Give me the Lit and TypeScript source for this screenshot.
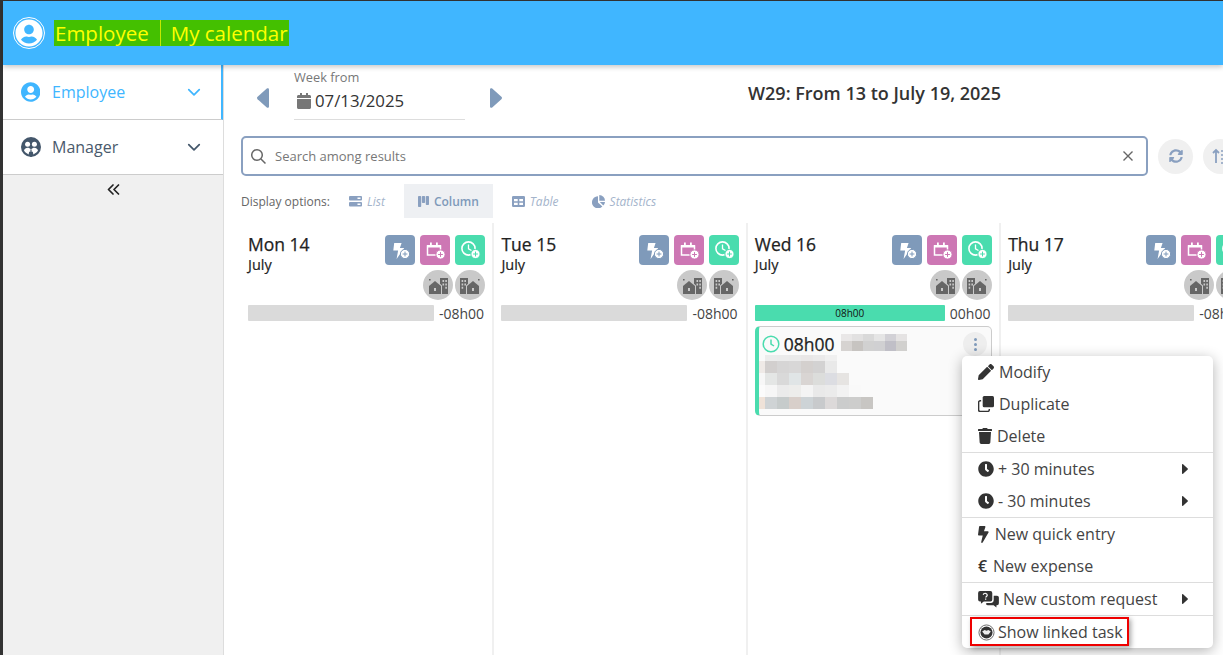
import { LitElement, css, html, svg } from 'lit'
import { customElement } from 'lit/decorators.js'

const fa = (w: number, d: string) =>
  html`<svg class="fa" viewBox="0 0 ${w} 512" fill="currentColor"><path d=${d}></path></svg>`

const CALENDAR = 'M12 192h424c6.6 0 12 5.4 12 12v260c0 26.5-21.5 48-48 48H48c-26.5 0-48-21.5-48-48V204c0-6.6 5.4-12 12-12zm436-44v-36c0-26.5-21.5-48-48-48h-48V12c0-6.6-5.4-12-12-12h-40c-6.6 0-12 5.4-12 12v52H160V12c0-6.6-5.4-12-12-12h-40c-6.6 0-12 5.4-12 12v52H48C21.5 64 0 85.5 0 112v36c0 6.6 5.4 12 12 12h424c6.6 0 12-5.4 12-12z'
const PENCIL = 'M497.9 142.1l-46.1 46.1c-4.7 4.7-12.3 4.7-17 0l-111-111c-4.7-4.7-4.7-12.3 0-17l46.1-46.1c18.7-18.7 49.1-18.7 67.9 0l60.1 60.1c18.8 18.7 18.8 49.1 0 67.9zM284.2 99.8L21.6 362.4.4 483.9c-2.9 16.4 11.4 30.6 27.8 27.8l121.5-21.3 262.6-262.6c4.7-4.7 4.7-12.3 0-17l-111-111c-4.8-4.7-12.4-4.7-17.1 0z'
const TRASH = 'M432 32H312l-9.4-18.7A24 24 0 0 0 281.1 0H166.8a23.72 23.72 0 0 0-21.4 13.3L136 32H16A16 16 0 0 0 0 48v32a16 16 0 0 0 16 16h416a16 16 0 0 0 16-16V48a16 16 0 0 0-16-16zM53.2 467a48 48 0 0 0 47.9 45h245.8a48 48 0 0 0 47.9-45L416 128H32z'
const CLOCK = 'M256,8C119,8,8,119,8,256S119,504,256,504,504,393,504,256,393,8,256,8Zm92.49,313h0l-20,25a16,16,0,0,1-22.49,2.5h0l-67-49.72a40,40,0,0,1-15-31.23V112a16,16,0,0,1,16-16h32a16,16,0,0,1,16,16V256l58,42.5A16,16,0,0,1,348.49,321Z'
const BOLT = 'M296 160H180.6l42.6-129.8C227.2 15 215.7 0 200 0H56C44 0 33.8 8.9 32.2 20.8l-32 240C-1.7 275.2 9.5 288 24 288h118.7L96.6 482.5c-3.6 15.2 8 29.5 23.3 29.5 8.4 0 16.4-4.4 20.8-12l176-304c9.3-15.9-2.2-36-20.7-36z'
const USER = 'M248 8C111 8 0 119 0 256s111 248 248 248 248-111 248-248S385 8 248 8zm0 96c48.6 0 88 39.4 88 88s-39.4 88-88 88-88-39.4-88-88 39.4-88 88-88zm0 344c-58.7 0-111.3-26.6-146.5-68.2 18.8-35.4 55.6-59.8 98.5-59.8 2.4 0 4.8.4 7.1 1.1 13 4.2 26.6 6.9 40.9 6.9 14.3 0 28-2.7 40.9-6.9 2.3-.7 4.7-1.1 7.1-1.1 42.9 0 79.7 24.4 98.5 59.8C359.3 421.4 306.7 448 248 448z'
const SYNC = 'M370.72 133.28C339.458 104.008 298.888 87.962 255.848 88c-77.458.068-144.328 53.178-162.791 126.85-1.344 5.363-6.122 9.15-11.651 9.15H24.103c-7.498 0-13.194-6.807-11.807-14.176C33.933 94.924 134.813 8 256 8c66.448 0 126.791 26.136 171.315 68.685L463.03 40.97C478.149 25.851 504 36.559 504 57.941V192c0 13.255-10.745 24-24 24H345.941c-21.382 0-32.09-25.851-16.971-40.971l41.75-41.749zM32 296h134.059c21.382 0 32.09 25.851 16.971 40.971l-41.75 41.75c31.262 29.273 71.835 45.319 114.876 45.28 77.418-.07 144.315-53.144 162.787-126.849 1.344-5.363 6.122-9.15 11.651-9.15h57.304c7.498 0 13.194 6.807 11.807 14.176C478.067 417.076 377.187 504 256 504c-66.448 0-126.791-26.136-171.315-68.685L48.97 471.03C33.851 486.149 8 475.441 8 454.059V320c0-13.255 10.745-24 24-24z'

// carets in the reference are wider than the plain glyph, so the box stretches them
const caretLeft = html`<svg class="stretch" viewBox="0 0 12 20" preserveAspectRatio="none" fill="currentColor"><path d="M12 1.500v17c0 1.200-1.300 1.800-2.200 1L.6 11.200a1.700 1.700 0 0 1 0-2.400L9.800.5c.9-.8 2.200-.2 2.200 1z"></path></svg>`
const caretRight = html`<svg class="stretch" viewBox="0 0 12 20" preserveAspectRatio="none" fill="currentColor"><path d="M0 18.500v-17C0 .3 1.300-.3 2.200.5l9.200 8.300a1.700 1.700 0 0 1 0 2.400l-9.200 8.300c-.9.8-2.200.2-2.200-1z"></path></svg>`

const chevron = (color: string) =>
  html`<svg width="14" height="14" viewBox="0 0 24 24"><path d="M3 8l9 9 9-9" fill="none" stroke=${color} stroke-width="3" stroke-linecap="round" stroke-linejoin="round"/></svg>`

const badge = (cx: number, cy: number, bg: string) => svg`
  <circle cx=${cx} cy=${cy} r="4.600" fill="#fff" stroke=${bg} stroke-width="1"/>
  <path d="M${cx - 2.400} ${cy}h4.800M${cx} ${cy - 2.400}v4.800" stroke=${bg} stroke-width="1"/>`

const quickIcon = html`<svg width="30" height="30" viewBox="0 0 30 30">
  <path d="M9.200 8h7.400l-1.700 5h4.300L11.600 24l1.500-8.500H8.300z" fill="#fff"/>${badge(20, 19, '#7f9aba')}</svg>`
const absenceIcon = html`<svg width="30" height="30" viewBox="0 0 30 30">
  <path d="M7.500 11h13v9h-13z" fill="none" stroke="#fff" stroke-width="1.500"/>
  <path d="M7 10h14v2.600H7zM10 7.500h1.800V10H10zM16 7.500h1.800V10H16z" fill="#fff"/>${badge(20.500, 19.500, '#cd77b4')}</svg>`
const timeIcon = html`<svg width="30" height="30" viewBox="0 0 30 30">
  <circle cx="13.500" cy="13.500" r="6.600" fill="none" stroke="#fff" stroke-width="1.600"/>
  <path d="M13.500 9.500v4.400l3 1.600" fill="none" stroke="#fff" stroke-width="1.300"/>${badge(20.500, 19, '#4adcae')}</svg>`

const homeOffice = html`<svg width="30" height="30" viewBox="0 0 30 30" fill="#666">
  <path d="M6 16l6-5 6 5v8H6z"/><path d="M17 8h8v16h-6v-8.600l-2-1.700z"/>
  <path d="M11 18h2v3h-2z" fill="#c9c9c9"/>
  <path d="M19.500 10h1.600v2h-1.600zM22.300 10h1.600v2h-1.600zM19.500 13.400h1.600v2h-1.600zM22.300 13.400h1.600v2h-1.600zM22.300 16.800h1.600v2h-1.600z" fill="#c9c9c9"/>
  <path d="M6 9h1.600v1.600H6z"/></svg>`
const officeHome = html`<svg width="30" height="30" viewBox="0 0 30 30" fill="#666">
  <path d="M5 8h8v5.700L11 15.400V24H5z"/><path d="M12 16l6-5 6 5v8H12z"/>
  <path d="M17 18h2v3h-2z" fill="#c9c9c9"/>
  <path d="M6.600 10h1.600v2H6.600zM9.400 10H11v2H9.400zM6.600 13.400h1.600v2H6.600zM9.400 13.400H11v2H9.400zM6.600 16.800h1.600v2H6.600z" fill="#c9c9c9"/>
  <path d="M23 9h1.600v1.600H23z"/></svg>`

const cloneIcon = html`<svg class="fa" viewBox="0 0 512 512" fill="currentColor">
  <rect x="150" y="0" width="362" height="362" rx="48"/>
  <path d="M100 150H70a50 50 0 0 0-50 50v242a50 50 0 0 0 50 50h242a50 50 0 0 0 50-50v-30" fill="none" stroke="currentColor" stroke-width="46"/></svg>`

const commentsIcon = html`<svg viewBox="0 0 22 18" width="21" height="17" fill="#333">
  <path d="M2 0h11a2 2 0 0 1 2 2v7a2 2 0 0 1-2 2H6l-3 2.600V11H2a2 2 0 0 1-2-2V2a2 2 0 0 1 2-2z"/>
  <path d="M16.500 5H20a2 2 0 0 1 2 2v6a2 2 0 0 1-2 2h-.6v2.600L16.400 15H10a2 2 0 0 1-1.800-1.200L9 12.600h4.500a3 3 0 0 0 3-3z"/>
  <path d="M5.400 4a2.200 2.200 0 0 1 4.300.3c0 1.500-1.600 1.500-1.600 2.600M8 8v1.300" fill="none" stroke="#fff" stroke-width="1.300"/></svg>`

const linkedIcon = html`<svg viewBox="0 0 18 18" width="17" height="17">
  <circle cx="9" cy="9" r="8" fill="#fff" stroke="#666" stroke-width="1"/>
  <circle cx="9" cy="9" r="6.400" fill="#333"/>
  <path d="M4.400 8l2.600-1.600 2 .8 2-.8 2.600 1.600-2.600 3H7z" fill="#eee"/></svg>`

const managerIcon = html`<svg width="20" height="20" viewBox="0 0 20 20">
  <circle cx="10" cy="10" r="10" fill="#44576b"/>
  <circle cx="6.600" cy="7.200" r="2.500" fill="#fff"/><circle cx="13.400" cy="7.200" r="2.500" fill="#fff"/>
  <path d="M3 13.600c.6-2 2-2.800 3.600-2.800 1.300 0 2.400.5 3.400 1.600 1-1.100 2.100-1.600 3.400-1.600 1.600 0 3 .8 3.600 2.800-1 1.600-2.600 3-4.600 3.800l-.6-2.600H8.200l-.6 2.600C5.600 16.600 4 15.200 3 13.600z" fill="#fff"/>
  <path d="M10 12.400V20" stroke="#44576b" stroke-width="1.200"/></svg>`

const doubleLeft = html`<svg width="13" height="11" viewBox="0 0 13 11" fill="none" stroke="#222" stroke-width="1.700" stroke-linecap="round" stroke-linejoin="round">
  <path d="M6 1L1.500 5.500 6 10M11.500 1L7 5.500l4.500 4.500"/></svg>`

const listIcon = html`<svg width="13" height="11" viewBox="0 0 13 11" fill="currentColor">
  <rect width="13" height="4.600" rx="1"/><rect y="6" width="13" height="4.600" rx="1"/>
  <path d="M8.500 1.500h3v1.400h-3zM8.500 7.600h3V9h-3z" fill="#fff"/></svg>`
const columnIcon = html`<svg width="11" height="11" viewBox="0 0 11 11" fill="currentColor">
  <rect width="3.200" height="11" rx=".8"/><rect x="3.900" width="3.200" height="7" rx=".8"/><rect x="7.800" width="3.200" height="9" rx=".8"/></svg>`
const tableIcon = html`<svg width="13" height="11" viewBox="0 0 13 11" fill="currentColor">
  <path fill-rule="evenodd" d="M1.200 0h10.600A1.200 1.200 0 0 1 13 1.200v8.600a1.200 1.200 0 0 1-1.200 1.200H1.200A1.200 1.200 0 0 1 0 9.800V1.200A1.200 1.200 0 0 1 1.200 0zM2 3v2.300h3.700V3zM7.300 3v2.300H11V3zM2 6.700V9h3.700V6.700zM7.300 6.700V9H11V6.700z"/></svg>`
const pieIcon = html`<svg width="13" height="13" viewBox="0 0 13 13" fill="currentColor">
  <path d="M6 1.200v6.200l4.400 4.200A6.100 6.100 0 1 1 6 1.200z"/><path d="M7.300 0a5.800 5.800 0 0 1 5.700 5.800H7.300zM7.800 7H13a5.900 5.900 0 0 1-1.700 3.600z"/></svg>`
const sortIcon = html`<svg width="18" height="16" viewBox="0 0 18 16" fill="none" stroke="#8aa0c0" stroke-width="1.800">
  <path d="M4 15V2M1 5l3-3 3 3"/><path d="M9 3h8M9 7h8M9 11h8M9 15h8" stroke-width="1.600"/></svg>`

type Day = { label: string; bar?: number; rest: string; card?: boolean }
const DAYS: Day[] = [
  { label: 'Mon 14', rest: '-08h00' },
  { label: 'Tue 15', rest: '-08h00' },
  { label: 'Wed 16', rest: '00h00', bar: 1, card: true },
  { label: 'Thu 17', rest: '-08h00' },
]

// blurred-out card content, one colour per cell ('' leaves the cell empty)
const BLUR_TITLE = [
  ['#e9e7e7', '#e2e1e1', '#d9d9d9', '#e5e5e5', '#d2d1d6', '#e5e3e3'],
  ['#d6d3d1', '#c7c4c1', '#d1d1d1', '#d0d0d2', '#c0bfc7', '#d1d0ce'],
]
const BLUR_BODY = [
  ['', '#ececec', '#ebebeb', '#eaeaea', '#e9e7e7', '#ebeaea', '#f0f0f0', '', '', ''],
  ['#efeae7', '#d2cfce', '#d6d5d5', '#d8d7d7', '#d4d0ce', '#d3d2d2', '#e9e9e9', '', '', ''],
  ['#f7f7f7', '#e4e6e5', '#d9d9d9', '#e0e5e6', '#d9d5d3', '#dcdddb', '#dcdde2', '#e6e4e2', '', ''],
  ['#fbfbfb', '#f6f6f6', '#ebebeb', '#ededeb', '#f4f4f4', '#e9e9e9', '#ebebeb', '#f2f2f2', '#f9f9f9', '#fafafa'],
  ['#efe2d8', '#cfd3d5', '#c6cbcb', '#d8cfca', '#cdd3d6', '#c8cacc', '#dcd9d9', '#cbcccc', '#cdcdcc', '#c8c6c3'],
]

@customElement('app-root')
export class AppRoot extends LitElement {
  static styles = css`
    :host {
      display: block;
      width: 1223px;
      height: 655px;
      overflow: hidden;
      font-family: 'Open Sans', sans-serif;
      color: #333;
    }
    .page {
      position: relative;
      box-sizing: border-box;
      width: 1223px;
      height: 655px;
      padding: 1px 0 0 3px;
      background: #333;
      display: flex;
      flex-direction: column;
    }
    .fa { display: block; height: 100%; }
    .stretch { display: block; width: 100%; height: 100%; }

    .header {
      flex: 0 0 64px;
      background: #40b6ff;
      display: flex;
      align-items: center;
      padding-left: 10px;
      box-shadow: 0 2px 5px rgba(0, 0, 0, 0.22);
      z-index: 2;
    }
    .logo {
      width: 28px;
      height: 28px;
      border: 1px solid #fff;
      border-radius: 50%;
      padding: 1px;
      color: #fff;
      margin-right: 9px;
    }
    .logo svg { width: 100%; height: 100%; }
    .app-title {
      display: flex;
      align-items: center;
      height: 26px;
      background: #44c000;
      color: #ff0;
      font-size: 20.5px;
      line-height: 26px;
      padding: 0 1px;
    }
    .app-title i {
      width: 1px;
      height: 26px;
      background: #c6e800;
      margin: 0 10px 0 11px;
    }

    .body { flex: 1; display: flex; min-height: 0; background: #fff; }
    .side {
      flex: 0 0 220px;
      background: #f0f0f0;
      border-right: 1px solid #ddd;
    }
    .side-item {
      box-sizing: border-box;
      height: 55px;
      background: #fff;
      border-bottom: 1px solid #ccc;
      display: flex;
      align-items: center;
      padding: 0 22px 0 18px;
      font-size: 16px;
      color: #4a5a6c;
      gap: 11px;
    }
    .side-item span { flex: 1; }
    .side-item.active { color: #40b6ff; border-right: 2px solid #40b6ff; padding-right: 20px; }
    .side-item .user { width: 20px; height: 20px; color: #40b6ff; }
    .collapse { display: flex; justify-content: center; padding-top: 9px; }

    .main {
      flex: 1;
      min-width: 0;
      display: flex;
      flex-direction: column;
      overflow: hidden;
      padding-left: 17px;
    }
    .week {
      flex: 0 0 71px;
      display: flex;
      align-items: flex-start;
    }
    .caret { flex: none; width: 12px; height: 20px; margin-top: 23px; color: #7f9aba; }
    .caret.left { margin-left: 16px; }
    .picker {
      box-sizing: border-box;
      flex: 0 0 171px;
      height: 55px;
      margin-left: 25px;
      border-bottom: 1px solid #ddd;
      margin-right: 25px;
      padding-top: 4px;
    }
    .picker small { display: block; font-size: 12.8px; line-height: 16px; color: #777; }
    .date { display: flex; align-items: center; gap: 4px; font-size: 16.8px; line-height: 24px; color: #333; margin-top: 4px; }
    .date .cal { width: 14px; height: 16px; margin-left: 3px; color: #777; }
    .week h1 {
      margin: 16px 0 0 0;
      flex: 0 0 745px;
      text-align: center;
      font-size: 18px;
      line-height: 24px;
      font-weight: 600;
      color: #333;
    }

    .tools { flex: 0 0 40px; display: flex; align-items: center; }
    .search {
      box-sizing: border-box;
      flex: 0 0 907px;
      height: 40px;
      border: 2px solid #8aa0c0;
      border-radius: 5px;
      display: flex;
      align-items: center;
      padding: 0 13px 0 7px;
      font-size: 13px;
      color: #777;
    }
    .search span { flex: 1; margin-left: 8px; }
    .round {
      flex: 0 0 35px;
      height: 35px;
      margin-left: 10px;
      border-radius: 50%;
      background: #f0f0f0;
      display: flex;
      align-items: center;
      justify-content: center;
      color: #8aa0c0;
    }
    .round .fa { height: 14px; }

    .options {
      flex: 0 0 34px;
      margin-top: 8px;
      display: flex;
      align-items: center;
      font-size: 12px;
      color: #666;
    }
    .tab {
      box-sizing: border-box;
      height: 34px;
      display: flex;
      align-items: center;
      gap: 5px;
      font-style: italic;
      color: #a4b4cb;
    }
    .tab svg { color: #8aa0c0; }
    .tab.on { background: #eef0f3; font-style: normal; font-weight: 600; color: #7f9aba; padding: 0 14px; margin-right: 19px; }
    .tab.first { margin: 0 19px; }
    .tab.stats { margin-left: 33px; }

    .board { flex: 1; display: flex; margin-top: 5px; min-height: 0; }
    .col {
      box-sizing: border-box;
      flex: 0 0 253.4px;
      padding: 12px 7px 0 7px;
      border-right: 2px solid #f0f0f0;
    }
    .col-head { display: flex; justify-content: space-between; height: 65px; }
    .col-head b {
      display: block;
      font-size: 17.5px;
      line-height: 19px;
      font-weight: 500;
      color: #222;
      -webkit-text-stroke: 0.25px #222;
    }
    .col-head em {
      display: block;
      font-size: 14.5px;
      line-height: 22px;
      font-style: normal;
      font-weight: 500;
      color: #222;
      -webkit-text-stroke: 0.2px #222;
    }
    .acts { display: grid; grid-template-columns: repeat(3, 30px); gap: 5px; justify-content: end; align-content: start; }
    .act { width: 30px; height: 30px; border-radius: 4px; }
    .act.blue { background: #7f9aba; }
    .act.pink { background: #cd77b4; }
    .act.green { background: #4adcae; }
    .places { grid-column: 1 / 4; display: flex; justify-content: flex-end; gap: 2px; }
    .place { width: 30px; height: 30px; border-radius: 50%; background: #c9c9c9; }

    .bar-row { display: flex; align-items: center; height: 16px; margin-top: 5px; font-size: 14px; color: #444; }
    .bar { flex: 0 0 186px; height: 16px; background: #dadada; border-radius: 1px; margin-right: 5px; }
    .bar.full {
      flex-basis: 190px;
      background: #4adcae;
      color: #111;
      font-size: 10px;
      line-height: 16px;
      text-align: center;
    }
    .rest { white-space: nowrap; }

    .card {
      box-sizing: border-box;
      position: relative;
      height: 90px;
      margin-top: 5px;
      background: #fafafa;
      border: 1px solid #ccc;
      border-left: 4px solid #4adcae;
      border-radius: 5px;
      padding: 5px 0 0 3px;
    }
    .card-top {
      display: flex;
      align-items: center;
      height: 24px;
      font-size: 17.5px;
      font-weight: 500;
      color: #222;
      -webkit-text-stroke: 0.25px #222;
    }
    .card-top svg { margin-right: 4px; }
    .card-top .blur { margin: -3px 0 0 6px; }
    .blur { display: grid; }
    .blur i { display: block; }
    .blur.title { grid-template-columns: repeat(6, 11px); grid-template-rows: 7px 10px; }
    .blur.text { grid-template-columns: 6px repeat(9, 12px); grid-template-rows: 6px repeat(4, 12px); margin: -1px 0 0 -3px; }
    .dots {
      position: absolute;
      top: 5px;
      right: 4px;
      width: 24px;
      height: 24px;
      border-radius: 50%;
      background: #eee;
      display: flex;
      flex-direction: column;
      align-items: center;
      justify-content: center;
      gap: 2px;
    }
    .dots i { width: 3px; height: 3px; border-radius: 50%; background: #7f9aba; }

    .menu {
      position: absolute;
      left: 962px;
      top: 356px;
      width: 251px;
      background: #fff;
      border-radius: 5px;
      box-shadow: 0 3px 14px rgba(0, 0, 0, 0.3);
      font-size: 16px;
      color: #444;
      z-index: 3;
    }
    .mi {
      position: relative;
      height: 32px;
      display: flex;
      align-items: center;
      padding-left: 16px;
      line-height: 32px;
    }
    .mi .ico { flex: none; height: 16px; display: flex; color: #333; margin-right: 5px; }
    .mi .ico.clock { width: 16px; margin-right: 4px; }
    .mi .ico.bolt { height: 17px; margin-right: 6px; }
    .mi .ico.free { height: auto; margin-right: 4px; }
    .mi .ico.linked { height: auto; margin-right: 3px; }
    .mi .arrow { position: absolute; right: 25px; top: 11px; width: 6px; height: 10px; color: #333; }
    .sep { height: 1px; background: #ddd; }
    .euro { font-size: 16px; font-weight: 600; color: #333; margin-right: 5px; width: 10px; }
    .redbox {
      position: absolute;
      left: 8px;
      top: 1px;
      width: 159px;
      height: 29px;
      box-sizing: border-box;
      border: 2px solid #e00;
      box-shadow: 2px 2px 5px rgba(0, 0, 0, 0.35);
    }
  `

  private _blur(rows: string[][], cls: string) {
    return html`<div class="blur ${cls}">
      ${rows.flat().map((c) => html`<i style=${c ? `background:${c}` : ''}></i>`)}
    </div>`
  }

  private _day(d: Day) {
    return html`<div class="col">
      <div class="col-head">
        <div><b>${d.label}</b><em>July</em></div>
        <div class="acts">
          <div class="act blue">${quickIcon}</div>
          <div class="act pink">${absenceIcon}</div>
          <div class="act green">${timeIcon}</div>
          <div class="places">
            <div class="place">${homeOffice}</div>
            <div class="place">${officeHome}</div>
          </div>
        </div>
      </div>
      <div class="bar-row">
        ${d.bar ? html`<div class="bar full">08h00</div>` : html`<div class="bar"></div>`}
        <span class="rest">${d.rest}</span>
      </div>
      ${d.card
        ? html`<div class="card">
            <div class="card-top">
              <svg width="18" height="18" viewBox="0 0 18 18" fill="none" stroke="#4adcae" stroke-width="1.500">
                <circle cx="9" cy="9" r="7.800"></circle><path d="M9 4.500V9l3 2"></path>
              </svg>
              08h00 ${this._blur(BLUR_TITLE, 'title')}
            </div>
            ${this._blur(BLUR_BODY, 'text')}
            <div class="dots"><i></i><i></i><i></i></div>
          </div>`
        : ''}
    </div>`
  }

  render() {
    return html`<div class="page">
      <header class="header">
        <div class="logo">${fa(496, USER)}</div>
        <div class="app-title">Employee<i></i>My calendar</div>
      </header>
      <div class="body">
        <nav class="side">
          <div class="side-item active">
            <div class="user">${fa(496, USER)}</div>
            <span>Employee</span>${chevron('#40b6ff')}
          </div>
          <div class="side-item">${managerIcon}<span>Manager</span>${chevron('#44576b')}</div>
          <div class="collapse">${doubleLeft}</div>
        </nav>
        <main class="main">
          <div class="week">
            <div class="caret left">${caretLeft}</div>
            <div class="picker">
              <small>Week from</small>
              <div class="date"><div class="cal">${fa(448, CALENDAR)}</div>07/13/2025</div>
            </div>
            <div class="caret">${caretRight}</div>
            <h1>W29: From 13 to July 19, 2025</h1>
          </div>
          <div class="tools">
            <div class="search">
              <svg width="17" height="17" viewBox="0 0 17 17" fill="none" stroke="#666" stroke-width="1.500">
                <circle cx="7" cy="7" r="5.300"></circle><path d="M11 11l4.500 4.500"></path>
              </svg>
              <span>Search among results</span>
              <svg width="10" height="10" viewBox="0 0 10 10" stroke="#666" stroke-width="1.400">
                <path d="M.5.500l9 9M9.500.500l-9 9"></path>
              </svg>
            </div>
            <div class="round">${fa(512, SYNC)}</div>
            <div class="round">${sortIcon}</div>
          </div>
          <div class="options">
            <span>Display options:</span>
            <div class="tab first">${listIcon}List</div>
            <div class="tab on">${columnIcon}Column</div>
            <div class="tab">${tableIcon}Table</div>
            <div class="tab stats">${pieIcon}Statistics</div>
          </div>
          <div class="board">${DAYS.map((d) => this._day(d))}</div>
        </main>
      </div>
      <div class="menu">
        <div class="mi"><span class="ico">${fa(512, PENCIL)}</span>Modify</div>
        <div class="mi"><span class="ico">${cloneIcon}</span>Duplicate</div>
        <div class="mi"><span class="ico">${fa(448, TRASH)}</span>Delete</div>
        <div class="sep"></div>
        <div class="mi"><span class="ico clock">${fa(512, CLOCK)}</span>+ 30 minutes<span class="arrow">${caretRight}</span></div>
        <div class="mi"><span class="ico clock">${fa(512, CLOCK)}</span>- 30 minutes<span class="arrow">${caretRight}</span></div>
        <div class="sep"></div>
        <div class="mi"><span class="ico bolt">${fa(320, BOLT)}</span>New quick entry</div>
        <div class="mi"><span class="euro">€</span>New expense</div>
        <div class="sep"></div>
        <div class="mi"><span class="ico free">${commentsIcon}</span>New custom request<span class="arrow">${caretRight}</span></div>
        <div class="sep"></div>
        <div class="mi"><span class="ico linked">${linkedIcon}</span>Show linked task<div class="redbox"></div></div>
      </div>
    </div>`
  }
}
